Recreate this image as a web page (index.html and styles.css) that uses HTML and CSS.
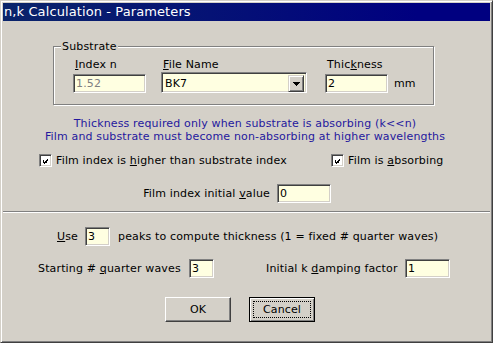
FILE: index.html
```html
<!DOCTYPE html>
<html lang="en">
<head>
  <meta charset="UTF-8">
  <meta name="viewport" content="width=device-width, initial-scale=1.0">
  <title>n,k Calculation - Parameters</title>
  <link rel="stylesheet" href="styles.css">
</head>
<body>

  <div class="window">
    <!-- Barra del titolo -->
    <div class="titlebar">n,k Calculation - Parameters</div>

    <div class="dialog">
      <!-- Gruppo substrato -->
      <fieldset class="group">
        <legend>Substrate</legend>
        <div class="group-row">
          <div class="field field-index">
            <label for="indexN"><u>I</u>ndex n</label>
            <input class="edit edit-disabled" id="indexN" type="text" value="1.52" readonly>
          </div>
          <div class="field field-file">
            <label><u>F</u>ile Name</label>
            <div class="combo">
              <span class="combo-text">BK7</span>
              <span class="combo-btn">
                <svg width="7" height="4" viewBox="0 0 7 4" shape-rendering="crispEdges">
                  <rect x="0" y="0" width="7" height="1" fill="#000"/>
                  <rect x="1" y="1" width="5" height="1" fill="#000"/>
                  <rect x="2" y="2" width="3" height="1" fill="#000"/>
                  <rect x="3" y="3" width="1" height="1" fill="#000"/>
                </svg>
              </span>
            </div>
          </div>
          <div class="field field-thick">
            <label for="thickness">Thic<u>k</u>ness</label>
            <div class="thick-row">
              <input class="edit edit-thick" id="thickness" type="text" value="2">
              <span class="unit">mm</span>
            </div>
          </div>
        </div>
      </fieldset>

      <!-- Note in blu -->
      <div class="note">
        Thickness required only when substrate is absorbing (k&lt;&lt;n)<br>
        Film and substrate must become non-absorbing at higher wavelengths
      </div>

      <!-- Caselle di controllo -->
      <div class="checks">
        <div class="check check-first">
          <span class="check-box">
            <svg width="7" height="7" viewBox="0 0 7 7" shape-rendering="crispEdges">
              <rect x="0" y="2" width="1" height="3" fill="#000"/>
              <rect x="1" y="3" width="1" height="3" fill="#000"/>
              <rect x="2" y="4" width="1" height="3" fill="#000"/>
              <rect x="3" y="3" width="1" height="3" fill="#000"/>
              <rect x="4" y="2" width="1" height="3" fill="#000"/>
              <rect x="5" y="1" width="1" height="3" fill="#000"/>
              <rect x="6" y="0" width="1" height="3" fill="#000"/>
            </svg>
          </span>
          <span>Film index is <u>h</u>igher than substrate index</span>
        </div>
        <div class="check">
          <span class="check-box">
            <svg width="7" height="7" viewBox="0 0 7 7" shape-rendering="crispEdges">
              <rect x="0" y="2" width="1" height="3" fill="#000"/>
              <rect x="1" y="3" width="1" height="3" fill="#000"/>
              <rect x="2" y="4" width="1" height="3" fill="#000"/>
              <rect x="3" y="3" width="1" height="3" fill="#000"/>
              <rect x="4" y="2" width="1" height="3" fill="#000"/>
              <rect x="5" y="1" width="1" height="3" fill="#000"/>
              <rect x="6" y="0" width="1" height="3" fill="#000"/>
            </svg>
          </span>
          <span>Film is <u>a</u>bsorbing</span>
        </div>
      </div>

      <!-- Valore iniziale -->
      <div class="row row-initial">
        <label class="lbl-initial" for="initialValue">Film index initial <u>v</u>alue</label>
        <input class="edit edit-initial" id="initialValue" type="text" value="0">
      </div>

      <div class="separator"></div>

      <!-- Picchi -->
      <div class="row row-use">
        <label class="lbl-use" for="peaks"><u>U</u>se</label>
        <input class="edit edit-small" id="peaks" type="text" value="3">
        <span class="lbl-peaks">peaks to compute thickness (1 = fixed # quarter waves)</span>
      </div>

      <div class="row row-start">
        <label class="lbl-start" for="quarter">Starting # <u>q</u>uarter waves</label>
        <input class="edit edit-small" id="quarter" type="text" value="3">
        <label class="lbl-damp" for="damping">Initial k <u>d</u>amping factor</label>
        <input class="edit edit-damp" id="damping" type="text" value="1">
      </div>

      <!-- Bottoni -->
      <div class="buttons">
        <button class="btn">OK</button>
        <button class="btn btn-default">Cancel</button>
      </div>
    </div>
  </div>

</body>
</html>
```

FILE: styles.css
```css
/* Impostazioni di base */
* {
  box-sizing: border-box;
}

body {
  margin: 0;
  background-color: #d4d0c8;
  font-family: "DejaVu Sans", Verdana, sans-serif;
  font-size: 11px;
  line-height: 13px;
  letter-spacing: 0.15px;
  color: #000;
}

/* Finestra */
.window {
  width: 493px;
  height: 343px;
  padding: 2px;
  border: 1px solid;
  border-color: #d4d0c8 #404040 #404040 #d4d0c8;
  box-shadow: inset 1px 1px 0 #fff, inset -1px -1px 0 #808080;
  background-color: #d4d0c8;
  display: flex;
  flex-direction: column;
}

.titlebar {
  height: 18px;
  padding-left: 1px;
  background: linear-gradient(to right, #0a246a, #000080 85%);
  color: #fff;
  font-size: 13px;
  line-height: 18px;
  letter-spacing: 0.1px;
  white-space: nowrap;
}

.dialog {
  flex: 1;
  display: flex;
  flex-direction: column;
}

/* Gruppo Substrate */
.group {
  margin: 19px 0 0 50px;
  width: 381px;
  min-width: 0;
  padding: 5px 0 11px 7px;
  border: 1px solid #808080;
  box-shadow: inset 1px 1px 0 #fff, 1px 1px 0 #fff;
}

.group legend {
  padding: 0 1px;
  background-color: #d4d0c8;
  line-height: 13px;
}

.group-row {
  display: flex;
  margin-left: 12px;
}

.field {
  display: flex;
  flex-direction: column;
}

.field label {
  height: 13px;
  padding-left: 2px;
}

.field-index {
  width: 73px;
  margin-right: 15px;
}

.field-file {
  width: 146px;
  margin-right: 18px;
}

.field-index .edit,
.thick-row {
  margin-top: 3px;
}

.thick-row {
  display: flex;
  align-items: center;
}

.unit {
  margin-left: 6px;
}

/* Caselle di testo */
.edit {
  height: 19px;
  padding: 0 2px;
  border: 1px solid;
  border-color: #808080 #fff #fff #808080;
  box-shadow: inset 1px 1px 0 #404040, inset -1px -1px 0 #d4d0c8;
  background-color: #ffffe1;
  font: inherit;
  letter-spacing: inherit;
  color: #000;
  outline: none;
}

.edit-disabled {
  color: #808080;
}

.field-index .edit {
  width: 73px;
}

.edit-thick {
  width: 63px;
}

.edit-initial {
  width: 54px;
}

.edit-small {
  width: 25px;
}

.edit-damp {
  width: 45px;
}

/* Combo */
.combo {
  margin-top: 1px;
  height: 21px;
  display: flex;
  padding: 2px;
  border: 1px solid;
  border-color: #808080 #fff #fff #808080;
  box-shadow: inset 1px 1px 0 #404040, inset -1px -1px 0 #d4d0c8;
  background-color: #ffffe1;
}

.combo-text {
  flex: 1;
  padding-left: 1px;
  line-height: 17px;
}

.combo-btn {
  width: 16px;
  height: 17px;
  display: flex;
  align-items: center;
  justify-content: center;
  border: 1px solid;
  border-color: #d4d0c8 #404040 #404040 #d4d0c8;
  box-shadow: inset 1px 1px 0 #fff, inset -1px -1px 0 #808080;
  background-color: #d4d0c8;
}

/* Testo blu */
.note {
  margin-top: 12px;
  padding-right: 3px;
  text-align: center;
  color: #25189e;
}

/* Checkbox */
.checks {
  display: flex;
  margin-top: 11px;
  padding-left: 36px;
}

.check {
  display: flex;
  align-items: center;
  gap: 4px;
}

.check-first {
  width: 292px;
}

.check-box {
  width: 13px;
  height: 13px;
  display: flex;
  padding: 3px;
  border: 1px solid;
  border-color: #808080 #fff #fff #808080;
  box-shadow: inset 1px 1px 0 #404040, inset -1px -1px 0 #d4d0c8;
  background-color: #fff;
}

/* Righe con etichetta e campo */
.row {
  display: flex;
  align-items: center;
}

.row-initial {
  margin-top: 17px;
}

.lbl-initial {
  width: 274px;
  padding-right: 7px;
  text-align: right;
}

.separator {
  margin-top: 8px;
  height: 2px;
  border-top: 1px solid #808080;
  border-bottom: 1px solid #fff;
}

.row-use {
  margin-top: 14px;
  padding-left: 54px;
}

.lbl-use {
  width: 28px;
}

.lbl-peaks {
  margin-left: 8px;
}

.row-start {
  margin-top: 13px;
  padding-left: 35px;
}

.lbl-start {
  width: 151px;
}

.lbl-damp {
  width: 139px;
  margin-left: 52px;
}

/* Bottoni */
.buttons {
  display: flex;
  gap: 18px;
  margin-top: 19px;
  padding-left: 162px;
}

.btn {
  width: 66px;
  height: 25px;
  padding: 0;
  border: 1px solid;
  border-color: #fff #404040 #404040 #fff;
  box-shadow: inset -1px -1px 0 #808080;
  background-color: #d4d0c8;
  font: inherit;
  letter-spacing: inherit;
  color: #000;
}

.btn-default {
  border-color: #000;
  box-shadow: inset 1px 1px 0 #fff, inset -1px -1px 0 #808080;
  outline: 1px dotted #000;
  outline-offset: -5px;
}
```
